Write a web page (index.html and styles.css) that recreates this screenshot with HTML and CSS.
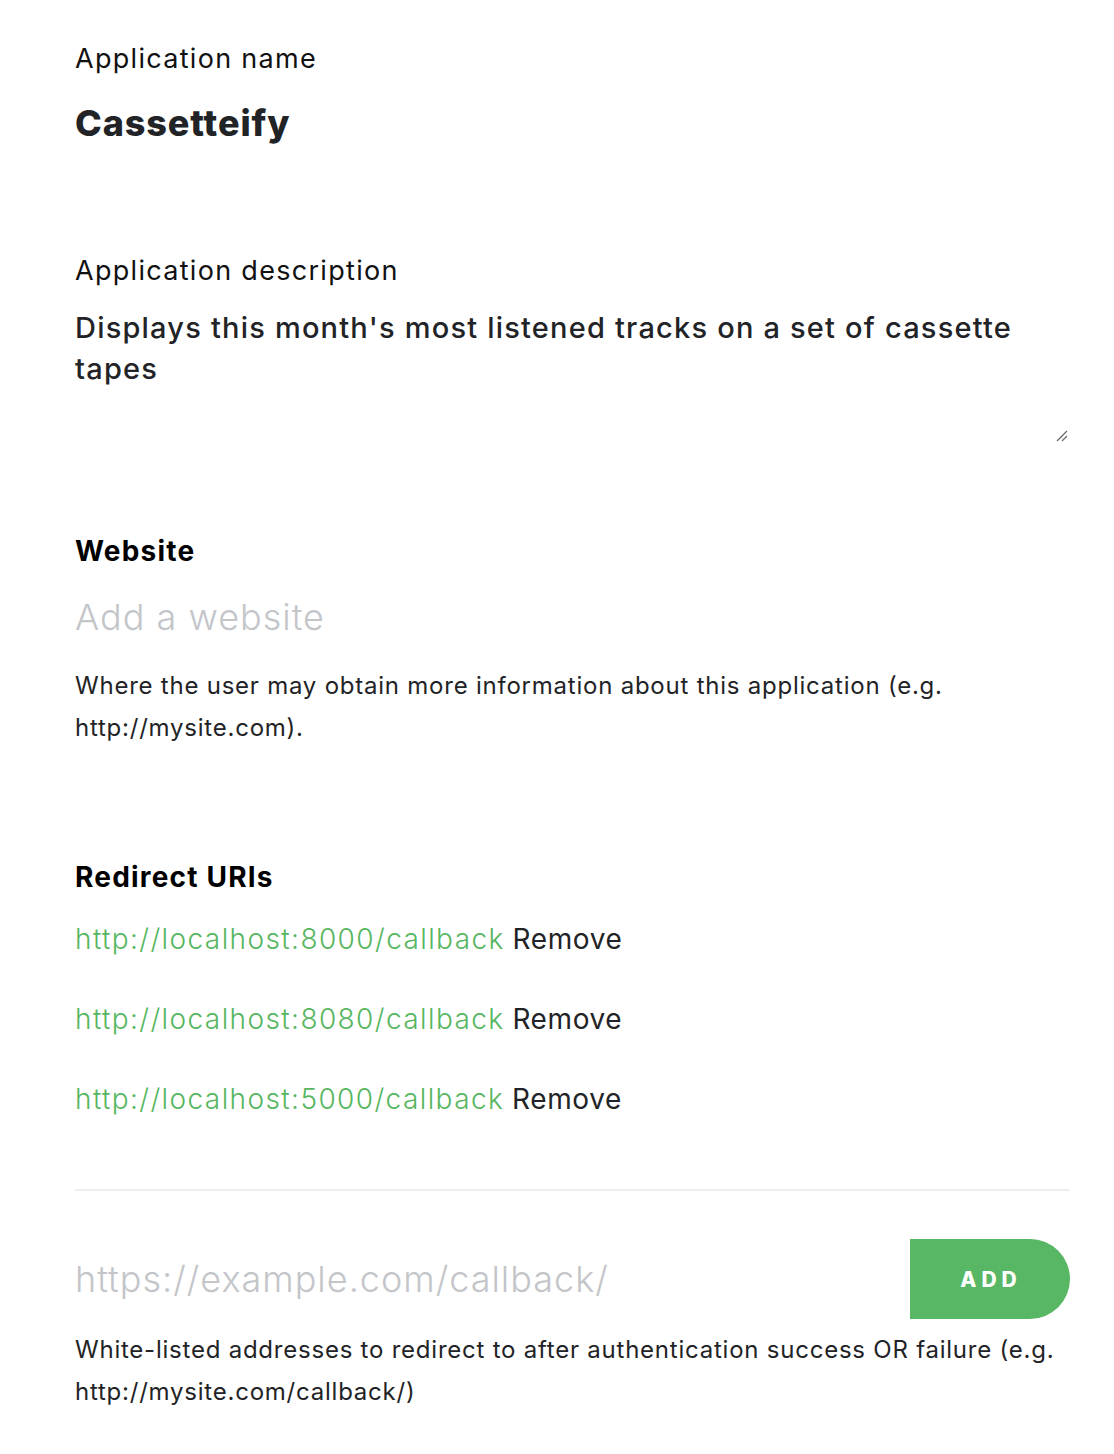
FILE: index.html
```html
<!DOCTYPE html>
<html>
<head>
<meta charset="utf-8">
<link rel="stylesheet" href="styles.css">
</head>
<body>
<main class="form">
  <section class="field field-name">
    <label class="label">Application name</label>
    <div class="app-name">Cassetteify</div>
  </section>

  <section class="field field-desc">
    <label class="label">Application description</label>
    <div class="textarea">
      <div class="desc-text">Displays this month's most listened tracks on a set of cassette tapes</div>
      <svg class="resize" width="12" height="12" viewBox="0 0 12 12"><path d="M1 11 L11 1 M6 11 L11 6" stroke="#666" stroke-width="1.2" fill="none"/></svg>
    </div>
  </section>

  <section class="field field-website">
    <h3 class="heading">Website</h3>
    <div class="placeholder">Add a website</div>
    <p class="help">Where the user may obtain more information about this application (e.g. http://mysite.com).</p>
  </section>

  <section class="field field-redirect">
    <h3 class="heading">Redirect URIs</h3>
    <ul class="uri-list">
      <li class="uri"><span class="uri-link">http://localhost:8000/callback</span> <span class="remove">Remove</span></li>
      <li class="uri"><span class="uri-link">http://localhost:8080/callback</span> <span class="remove">Remove</span></li>
      <li class="uri"><span class="uri-link">http://localhost:5000/callback</span> <span class="remove">Remove</span></li>
    </ul>
    <div class="divider"></div>
    <div class="add-row">
      <div class="placeholder add-input">https://example.com/callback/</div>
      <button class="add-btn">ADD</button>
    </div>
    <p class="help help-redirect">White-listed addresses to redirect to after authentication success OR failure (e.g. http://mysite.com/callback/)</p>
  </section>
</main>
</body>
</html>
```

FILE: styles.css
```css
* { box-sizing: border-box; }
html, body { margin: 0; padding: 0; background: #fff; }
body {
  font-family: "Inter", "Liberation Sans", sans-serif;
  color: #222326;
}
.form {
  width: 995px;
  margin-left: 75px;
  padding-top: 38px;
}
.label {
  display: block;
  font-size: 27px;
  line-height: 42px;
  font-weight: 400;
  letter-spacing: 1.3px;
  color: #111;
}
.app-name {
  margin-top: 20px;
  font-size: 36px;
  line-height: 46px;
  font-weight: 800;
  letter-spacing: 0.9px;
  color: #222326;
}
.field-desc { margin-top: 104px; }
.textarea {
  position: relative;
  margin-top: 15px;
  height: 139px;
}
.desc-text {
  font-size: 29px;
  line-height: 41px;
  font-weight: 500;
  letter-spacing: 1.2px;
  color: #222326;
}
.resize {
  position: absolute;
  right: 2px;
  bottom: 4px;
}
.field-website { margin-top: 85px; }
.heading {
  margin: 0;
  font-size: 28px;
  line-height: 40px;
  font-weight: 700;
  letter-spacing: 1.2px;
  color: #000;
}
.placeholder {
  font-size: 36px;
  line-height: 52px;
  font-weight: 300;
  letter-spacing: 1px;
  color: #c3c5c9;
}
.field-website .placeholder { margin-top: 20px; }
.help {
  margin: 22px 0 0;
  font-size: 24px;
  line-height: 42px;
  letter-spacing: 0.77px;
  color: #222326;
}
.field-redirect { margin-top: 108px; }
.uri-list {
  list-style: none;
  margin: 22px 0 0;
  padding: 0;
}
.uri {
  font-size: 28px;
  line-height: 40px;
  font-weight: 300;
  margin-bottom: 40px;
}
.uri:last-child { margin-bottom: 0; }
.uri-link { color: #57b65f; letter-spacing: 1.4px; }
.remove { color: #222326; font-weight: 400; letter-spacing: 0.6px; }
.divider {
  margin-top: 70px;
  height: 2px;
  background: #eeeeee;
}
.add-row {
  display: flex;
  align-items: center;
  margin-top: 48px;
}
.add-input { flex: 1; }
.add-btn {
  width: 160px;
  height: 80px;
  border: 0;
  border-radius: 0 40px 40px 0;
  background: #58b764;
  color: #fff;
  font-family: "Inter", sans-serif;
  font-weight: 800;
  font-size: 21px;
  letter-spacing: 5px;
  padding: 0 0 0 2px;
}
.help-redirect { margin-top: 10px; }
```
